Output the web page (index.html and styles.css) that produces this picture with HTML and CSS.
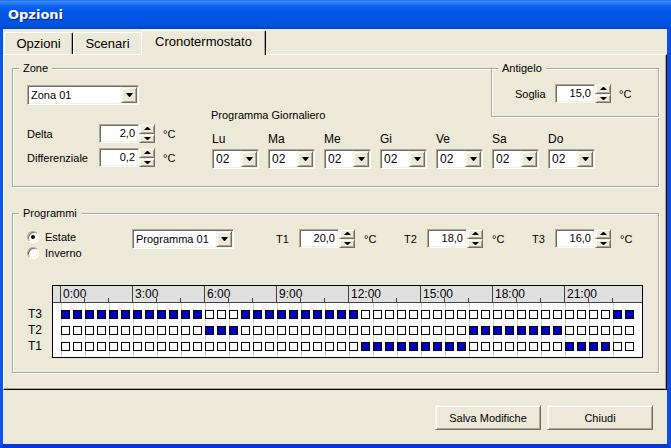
FILE: index.html
```html
<!DOCTYPE html>
<html lang="it">
<head>
<meta charset="utf-8">
<title>Opzioni</title>
<link rel="stylesheet" href="styles.css">
</head>
<body>
<div class="window">
  <div class="titlebar"><span class="title">Opzioni</span></div>
  <div class="frame">
    <div class="tabs">
      <div class="tab tab-opzioni">Opzioni</div>
      <div class="tab tab-scenari">Scenari</div>
      <div class="tab tab-active">Cronotermostato</div>
    </div>
    <div class="panel">
      <div class="group zone">
        <span class="legend">Zone</span>
        <div class="zone-left">
          <div class="combo combo-zona"><span class="cval">Zona 01</span><span class="drop"><span class="arrow-down"></span></span></div>
          <div class="params">
            <div class="param">
              <span class="plabel">Delta</span>
              <span class="field">2,0</span>
              <span class="arrows"><span class="sbtn"><span class="arrow-up"></span></span><span class="sbtn"><span class="arrow-dn"></span></span></span>
              <span class="unit">°C</span>
            </div>
            <div class="param">
              <span class="plabel">Differenziale</span>
              <span class="field">0,2</span>
              <span class="arrows"><span class="sbtn"><span class="arrow-up"></span></span><span class="sbtn"><span class="arrow-dn"></span></span></span>
              <span class="unit">°C</span>
            </div>
          </div>
        </div>
        <div class="zone-right">
          <div class="sublabel">Programma Giornaliero</div>
          <div class="days">
            <div class="day"><div class="dlabel">Lu</div><div class="combo combo-day"><span class="cval">02</span><span class="drop"><span class="arrow-down"></span></span></div></div>
            <div class="day"><div class="dlabel">Ma</div><div class="combo combo-day"><span class="cval">02</span><span class="drop"><span class="arrow-down"></span></span></div></div>
            <div class="day"><div class="dlabel">Me</div><div class="combo combo-day"><span class="cval">02</span><span class="drop"><span class="arrow-down"></span></span></div></div>
            <div class="day"><div class="dlabel">Gi</div><div class="combo combo-day"><span class="cval">02</span><span class="drop"><span class="arrow-down"></span></span></div></div>
            <div class="day"><div class="dlabel">Ve</div><div class="combo combo-day"><span class="cval">02</span><span class="drop"><span class="arrow-down"></span></span></div></div>
            <div class="day"><div class="dlabel">Sa</div><div class="combo combo-day"><span class="cval">02</span><span class="drop"><span class="arrow-down"></span></span></div></div>
            <div class="day"><div class="dlabel">Do</div><div class="combo combo-day"><span class="cval">02</span><span class="drop"><span class="arrow-down"></span></span></div></div>
          </div>
        </div>
      </div>

      <div class="group antigelo">
        <span class="legend">Antigelo</span>
        <div class="param">
          <span class="slabel">Soglia</span>
          <span class="field">15,0</span>
          <span class="arrows"><span class="sbtn"><span class="arrow-up"></span></span><span class="sbtn"><span class="arrow-dn"></span></span></span>
          <span class="unit">°C</span>
        </div>
      </div>

      <div class="group programmi">
        <span class="legend">Programmi</span>
        <div class="prog-top">
          <div class="radios">
            <div class="ritem"><span class="radio checked"></span><span>Estate</span></div>
            <div class="ritem"><span class="radio"></span><span>Inverno</span></div>
          </div>
          <div class="combo combo-prog"><span class="cval">Programma 01</span><span class="drop"><span class="arrow-down"></span></span></div>
          <div class="tgroups">
            <div class="tgroup">
              <span class="tlabel">T1</span>
              <span class="field">20,0</span>
              <span class="arrows"><span class="sbtn"><span class="arrow-up"></span></span><span class="sbtn"><span class="arrow-dn"></span></span></span>
              <span class="unit">°C</span>
            </div>
            <div class="tgroup">
              <span class="tlabel">T2</span>
              <span class="field">18,0</span>
              <span class="arrows"><span class="sbtn"><span class="arrow-up"></span></span><span class="sbtn"><span class="arrow-dn"></span></span></span>
              <span class="unit">°C</span>
            </div>
            <div class="tgroup">
              <span class="tlabel">T3</span>
              <span class="field">16,0</span>
              <span class="arrows"><span class="sbtn"><span class="arrow-up"></span></span><span class="sbtn"><span class="arrow-dn"></span></span></span>
              <span class="unit">°C</span>
            </div>
          </div>
        </div>

        <div class="timeline">
          <div class="tl-labels">
            <div>T3</div>
            <div>T2</div>
            <div>T1</div>
          </div>
          <div class="tl-box">
            <div class="tl-head">
              <span class="tl-corner"></span>
              <span class="seg">0:00</span>
              <span class="seg">3:00</span>
              <span class="seg">6:00</span>
              <span class="seg">9:00</span>
              <span class="seg">12:00</span>
              <span class="seg">15:00</span>
              <span class="seg">18:00</span>
              <span class="seg">21:00</span>
              <span class="seg-fill"></span>
            </div>
            <div class="tl-body">
              <div class="tl-cells">
                <div class="tl-row">
                  <i class="on"></i><i class="on"></i><i class="on"></i><i class="on"></i><i class="on"></i><i class="on"></i><i class="on"></i><i class="on"></i><i class="on"></i><i class="on"></i><i class="on"></i><i class="on"></i><i></i><i></i><i></i><i class="on"></i><i class="on"></i><i class="on"></i><i class="on"></i><i class="on"></i><i class="on"></i><i class="on"></i><i class="on"></i><i class="on"></i><i class="on"></i><i></i><i></i><i></i><i></i><i></i><i></i><i></i><i></i><i></i><i></i><i></i><i></i><i></i><i></i><i></i><i></i><i></i><i></i><i></i><i></i><i></i><i class="on"></i><i class="on"></i>
                </div>
                <div class="tl-row">
                  <i></i><i></i><i></i><i></i><i></i><i></i><i></i><i></i><i></i><i></i><i></i><i></i><i class="on"></i><i class="on"></i><i class="on"></i><i></i><i></i><i></i><i></i><i></i><i></i><i></i><i></i><i></i><i></i><i></i><i></i><i></i><i></i><i></i><i></i><i></i><i></i><i></i><i class="on"></i><i class="on"></i><i class="on"></i><i class="on"></i><i class="on"></i><i class="on"></i><i class="on"></i><i class="on"></i><i></i><i></i><i></i><i></i><i></i><i></i>
                </div>
                <div class="tl-row">
                  <i></i><i></i><i></i><i></i><i></i><i></i><i></i><i></i><i></i><i></i><i></i><i></i><i></i><i></i><i></i><i></i><i></i><i></i><i></i><i></i><i></i><i></i><i></i><i></i><i></i><i class="on"></i><i class="on"></i><i class="on"></i><i class="on"></i><i class="on"></i><i class="on"></i><i class="on"></i><i class="on"></i><i class="on"></i><i></i><i></i><i></i><i></i><i></i><i></i><i></i><i></i><i class="on"></i><i class="on"></i><i class="on"></i><i class="on"></i><i></i><i></i>
                </div>
              </div>
            </div>
          </div>
        </div>
      </div>
    </div>
    <div class="footer">
      <button class="btn">Salva Modifiche</button>
      <button class="btn">Chiudi</button>
    </div>
  </div>
</div>
</body>
</html>
```

FILE: styles.css
```css
* { box-sizing: border-box; }

body {
  margin: 0;
  font-family: "Liberation Sans", Arial, sans-serif;
  font-size: 11px;
  color: #000;
  background: #fff;
}

.window {
  width: 671px;
  height: 448px;
  display: flex;
  flex-direction: column;
  background: #0c55e6;
}

.titlebar {
  height: 29px;
  flex: none;
  display: flex;
  align-items: center;
  padding-left: 8px;
  background: linear-gradient(to bottom,
    #0a5ae8 0px, #3d8ff8 1px, #2a7ef5 3px, #0d62ee 6px,
    #0157ea 12px, #0054e3 20px, #0150db 26px, #0144c8 29px);
}

.title {
  color: #fff;
  font-family: "DejaVu Sans", sans-serif;
  font-weight: bold;
  font-size: 13px;
  text-shadow: 1px 1px 0 #0a2a8a;
}

.frame {
  flex: 1;
  display: flex;
  flex-direction: column;
  background: #ece9d8;
  border-left: 3px solid #0b55e8;
  border-right: 4px solid #0a4fe2;
  border-bottom: 4px solid #0838d8;
  padding-top: 1px;
}

/* Tabs */
.tabs {
  display: flex;
  align-items: flex-end;
  height: 24px;
  padding-left: 1px;
  flex: none;
}

.tab {
  height: 22px;
  font-size: 13px;
  line-height: 20px;
  padding-top: 1px;
  text-align: center;
  background: #ece9d8;
  border-top: 1px solid #fff;
  border-left: 1px solid #fff;
  border-radius: 2px 2px 0 0;
}

.tab-opzioni {
  width: 69px;
  border-right: 1px solid #000;
  box-shadow: inset -1px 0 0 #aca899;
}

.tab-scenari {
  width: 68px;
}

.tab-active {
  width: 125px;
  height: 25px;
  line-height: 22px;
  padding-top: 0;
  margin-bottom: -1px;
  position: relative;
  z-index: 1;
  border-right: 1px solid #000;
  box-shadow: inset -1px 0 0 #aca899;
}

/* Panel */
.panel {
  position: relative;
  height: 336px;
  flex: none;
  border-top: 1px solid #fff;
  border-left: 1px solid #fff;
  border-right: 1px solid #000;
  border-bottom: 1px solid #000;
  box-shadow: inset -1px -1px 0 #aca899;
}

.group {
  position: relative;
  border: 1px solid #aca899;
  box-shadow: 1px 1px 0 #fff, inset 1px 1px 0 #fff;
}

.legend {
  position: absolute;
  top: -8px;
  left: 6px;
  padding: 0 4px;
  line-height: 14px;
  background: #ece9d8;
}

/* Zone */
.zone {
  margin: 13px 0 0 8px;
  width: 647px;
  height: 119px;
  display: flex;
  align-items: flex-start;
  padding: 16px 0 0 14px;
}

.zone-left {
  width: 184px;
  flex: none;
}

.params {
  margin-top: 19px;
  display: flex;
  flex-direction: column;
  gap: 5px;
}

.param {
  display: flex;
  align-items: center;
  height: 19px;
}

.plabel { width: 72px; }
.slabel { width: 40px; }

.unit { margin-left: 8px; }

.zone-right {
  margin-top: 24px;
}

.sublabel { line-height: 13px; }

.days {
  display: flex;
  gap: 9px;
  margin-top: 11px;
  margin-left: 1px;
}

.dlabel {
  line-height: 13px;
  margin-bottom: 3px;
  font-size: 12px;
}

/* Sunken / raised controls */
.field, .combo {
  background: #fff;
  border: 1px solid;
  border-color: #aca899 #fff #fff #aca899;
  box-shadow: inset 1px 1px 0 #716f64, inset -1px -1px 0 #f1efe2;
}

.field {
  width: 40px;
  height: 19px;
  text-align: right;
  padding-right: 3px;
  line-height: 17px;
}

.arrows {
  display: flex;
  flex-direction: column;
  width: 16px;
  height: 19px;
}

.sbtn, .drop, .btn {
  background: #ece9d8;
  border: 1px solid;
  border-color: #f1efe2 #716f64 #716f64 #f1efe2;
  box-shadow: inset 1px 1px 0 #fff, inset -1px -1px 0 #aca899;
}

.sbtn {
  flex: 1;
  display: flex;
  align-items: center;
  justify-content: center;
}

.arrow-up {
  width: 1px;
  height: 0;
  border-left: 3px solid transparent;
  border-right: 3px solid transparent;
  border-bottom: 3px solid #000;
  box-sizing: content-box;
}

.arrow-dn {
  width: 1px;
  height: 0;
  border-left: 3px solid transparent;
  border-right: 3px solid transparent;
  border-top: 3px solid #000;
  box-sizing: content-box;
}

.arrow-down {
  width: 1px;
  height: 0;
  border-left: 3px solid transparent;
  border-right: 3px solid transparent;
  border-top: 4px solid #000;
  box-sizing: content-box;
}

.combo {
  display: flex;
  height: 20px;
  padding: 1px;
}

.cval {
  flex: 1;
  padding-left: 2px;
  line-height: 16px;
  white-space: nowrap;
  overflow: hidden;
}

.drop {
  width: 16px;
  flex: none;
  display: flex;
  align-items: center;
  justify-content: center;
}

.combo-zona { width: 112px; }
.combo-day { width: 47px; }
.combo-day .cval { font-size: 12px; }
.combo-prog { width: 102px; flex: none; }

/* Antigelo */
.antigelo {
  position: absolute;
  left: 487px;
  top: 13px;
  width: 168px;
  height: 49px;
  background: #ece9d8;
  padding: 15px 0 0 23px;
}

/* Programmi */
.programmi {
  margin: 26px 0 0 8px;
  width: 647px;
  height: 160px;
  padding: 15px 0 0 14px;
}

.prog-top {
  display: flex;
  align-items: flex-start;
}

.radios {
  width: 105px;
  flex: none;
}

.ritem {
  display: flex;
  align-items: center;
  height: 16px;
}

.radio {
  width: 12px;
  height: 12px;
  margin-right: 6px;
  border-radius: 50%;
  border: 1px solid;
  border-color: #aca899 #fff #fff #aca899;
  box-shadow: inset 1px 1px 0 #716f64, inset -1px -1px 0 #f1efe2;
  background: #fff;
  display: flex;
  align-items: center;
  justify-content: center;
}

.radio.checked::after {
  content: "";
  width: 4px;
  height: 4px;
  border-radius: 50%;
  background: #000;
}

.tgroups {
  display: flex;
  margin-left: 42px;
}

.tgroup {
  width: 128px;
  display: flex;
  align-items: center;
  height: 19px;
}

.tlabel { width: 23px; }
.tgroup .unit { margin-left: 9px; }

/* Timeline */
.timeline {
  display: flex;
  margin: 24px 0 0 1px;
}

.tl-labels {
  width: 24px;
  padding-top: 21px;
}

.tl-labels div {
  line-height: 16px;
  font-size: 12px;
}

.tl-box {
  width: 591px;
  height: 73px;
  border: 1px solid #000;
  background: #fff;
}

.tl-head {
  display: flex;
  height: 17px;
  background: #e0e0e0;
  border-bottom: 1px solid #404040;
}

.tl-corner {
  width: 7px;
  flex: none;
}

.seg {
  width: 72px;
  flex: none;
  border-left: 1px solid #404040;
  padding-left: 2px;
  line-height: 16px;
  font-size: 12px;
  background-image: linear-gradient(#404040, #404040), linear-gradient(#404040, #404040);
  background-size: 1px 4px, 1px 4px;
  background-position: 23px 100%, 47px 100%;
  background-repeat: no-repeat;
}

.seg-fill { flex: 1; }

.tl-body {
  height: 54px;
  padding-left: 8px;
  display: flex;
}

.tl-cells {
  width: 576px;
  padding-top: 7px;
  display: flex;
  flex-direction: column;
  gap: 7px;
  background-image: linear-gradient(to right, #cfcfcf 1px, transparent 1px);
  background-size: 24px 100%;
}

.tl-row {
  display: flex;
  gap: 3px;
}

.tl-row i {
  width: 9px;
  height: 9px;
  border: 1px solid #000;
  background: #fff;
}

.tl-row i.on {
  background: #0000c0;
}

/* Footer */
.footer {
  flex: 1;
  display: flex;
  justify-content: flex-end;
  align-items: flex-start;
  gap: 6px;
  padding: 15px 14px 0 0;
}

.btn {
  width: 106px;
  height: 25px;
  font-family: "Liberation Sans", Arial, sans-serif;
  font-size: 11px;
  color: #000;
  padding: 0;
}
```
